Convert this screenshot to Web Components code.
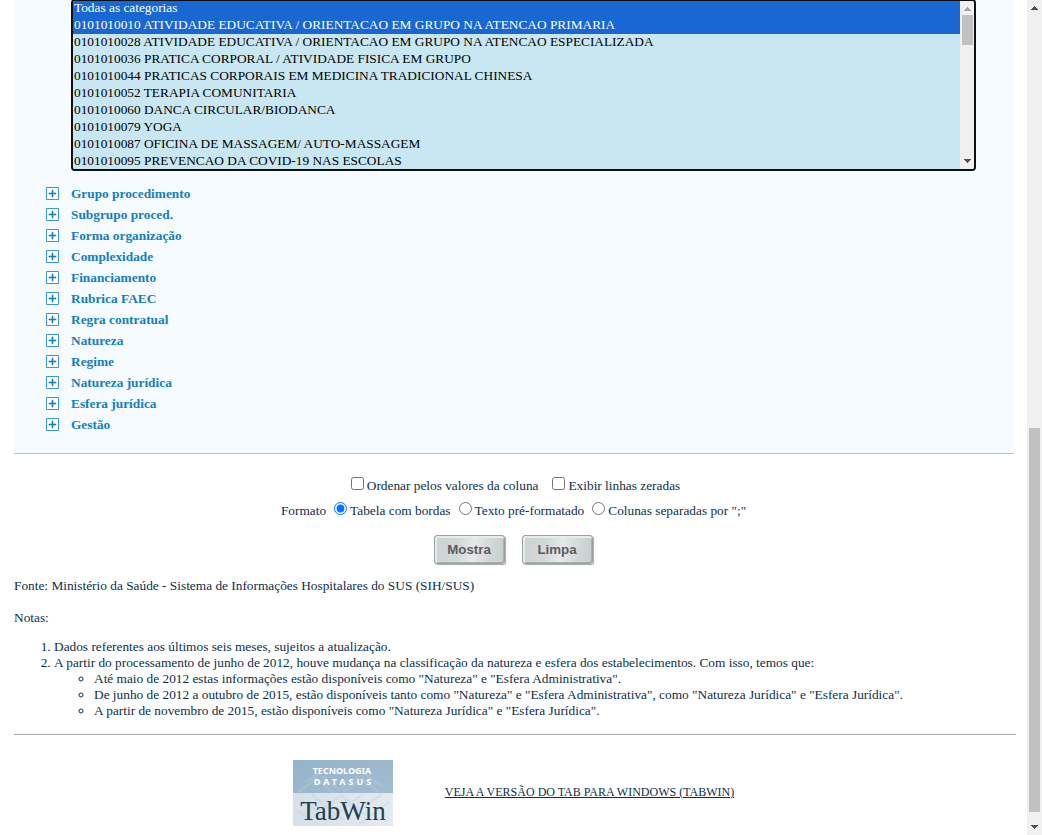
<!DOCTYPE html>
<html lang="pt-BR">
<head>
<meta charset="utf-8">
<title>TabNet - Procedimentos hospitalares do SUS</title>
<style>
html, body { margin: 0; height: 100%; }
body { background: #fff; color: #0c2f4c; font: 10pt/16px "Liberation Serif", "Times New Roman", serif; }
</style>
</head>
<body>
<tab-page>
  <selection-panel>
    <category-list></category-list>
    <fold-item>Grupo procedimento</fold-item>
    <fold-item>Subgrupo proced.</fold-item>
    <fold-item>Forma organização</fold-item>
    <fold-item>Complexidade</fold-item>
    <fold-item>Financiamento</fold-item>
    <fold-item>Rubrica FAEC</fold-item>
    <fold-item>Regra contratual</fold-item>
    <fold-item>Natureza</fold-item>
    <fold-item>Regime</fold-item>
    <fold-item>Natureza jurídica</fold-item>
    <fold-item>Esfera jurídica</fold-item>
    <fold-item>Gestão</fold-item>
  </selection-panel>
  <output-options></output-options>
  <source-notes></source-notes>
  <page-footer></page-footer>
</tab-page>

<script>
function define(name, html, ready) {
  const template = document.createElement('template');
  template.innerHTML = html;
  customElements.define(name, class extends HTMLElement {
    constructor() {
      super();
      this.attachShadow({ mode: 'open' }).append(template.content.cloneNode(true));
    }
    connectedCallback() { if (ready) ready(this.shadowRoot); }
  });
}

/* Scroll track; --before and --after share out the free track around the thumb */
define('scroll-track', `
<style>
  :host { display: flex; flex-direction: column; background: #f0f0f0; }
  svg { flex: none; display: block; width: 100%; height: 14px; }
  .track { flex: 1; display: flex; flex-direction: column; padding: 0 2px; }
  .before { flex: var(--before) 0 0px; }
  .thumb { flex: var(--thumb) 0 0px; background: #c1c1c1; }
  .after { flex: var(--after) 0 0px; }
  .up { fill: var(--up, #505050); }
  .down { fill: #505050; }
</style>
<svg viewBox="0 0 15 14" preserveAspectRatio="xMidYMid" aria-hidden="true"><path class="up" d="M4 10V9h1V8h1V7h1V6h1v1h1v1h1v1h1v1z"/></svg>
<div class="track"><div class="before"></div><div class="thumb"></div><div class="after"></div></div>
<svg viewBox="0 0 15 14" preserveAspectRatio="xMidYMid" aria-hidden="true"><path class="down" d="M4 4v1h1v1h1v1h1v1h1V7h1V6h1V5h1V4z"/></svg>`);

define('tab-page', `
<style>
  :host { display: grid; grid-template-columns: minmax(0, 1fr) 15px; height: 100vh; overflow: hidden; }
  main { min-height: 0; overflow: hidden; padding: 0 13px 0 14px; }
  scroll-track { --before: 414; --thumb: 384; --after: 9; }
</style>
<main><slot></slot></main>
<scroll-track></scroll-track>`);

define('selection-panel', `
<style>
  :host { display: flow-root; background: #f5fbff; border-bottom: 1px solid #b9c2c9; padding: 0 38px 18px 32px; }
</style>
<slot></slot>`);

define('category-list', `
<style>
  :host { display: flex; box-sizing: border-box; height: 172px; margin: -1px 0 12px 25px; border: 2px solid #101010; border-radius: 4px; overflow: hidden; background: #c9e7f2; }
  select { flex: 1; min-width: 0; height: 170px; margin: -1px 0; padding: 0; border: 0; outline: 0; border-radius: 0; background: #c9e7f2; color: #000; font: inherit; scrollbar-width: none; }
  option { box-sizing: border-box; height: 17px; min-height: 17px; line-height: 17px; padding: 0 1px; }
  option:checked { background: #1967d2 linear-gradient(#1967d2, #1967d2); -webkit-text-fill-color: #fff; }
  scroll-track { width: 15px; margin-right: -1px; --up: #a3a3a3; --before: 0; --thumb: 30; --after: 110; }
</style>
<select multiple size="10" aria-label="Procedimento">
  <option selected>Todas as categorias</option>
  <option selected>0101010010 ATIVIDADE EDUCATIVA / ORIENTACAO EM GRUPO NA ATENCAO PRIMARIA</option>
  <option>0101010028 ATIVIDADE EDUCATIVA / ORIENTACAO EM GRUPO NA ATENCAO ESPECIALIZADA</option>
  <option>0101010036 PRATICA CORPORAL / ATIVIDADE FISICA EM GRUPO</option>
  <option>0101010044 PRATICAS CORPORAIS EM MEDICINA TRADICIONAL CHINESA</option>
  <option>0101010052 TERAPIA COMUNITARIA</option>
  <option>0101010060 DANCA CIRCULAR/BIODANCA</option>
  <option>0101010079 YOGA</option>
  <option>0101010087 OFICINA DE MASSAGEM/ AUTO-MASSAGEM</option>
  <option>0101010095 PREVENCAO DA COVID-19 NAS ESCOLAS</option>
</select>
<scroll-track></scroll-track>`, root => root.querySelector('select').focus({ preventScroll: true }));

define('fold-item', `
<style>
  :host { display: block; height: 21px; line-height: 21px; }
  a { display: inline-flex; align-items: center; gap: 12px; color: #1480bd; font-weight: bold; text-decoration: none; }
  svg { width: 13px; height: 13px; }
</style>
<a href="#"><svg viewBox="0 0 13 13" aria-hidden="true"><path d="M.5.5h12v12H.5z" fill="#fff" stroke="#3b96c9"/><path d="M3 6h7v1H3zM6 3h1v7H6z" fill="#1480bd" stroke="#1480bd" stroke-width=".6"/></svg><slot></slot></a>`);

define('push-button', `
<style>
  :host { display: inline-block; }
  button { display: block; width: 71px; height: 29px; padding: 0; border: 1px solid #9ba1a1; border-radius: 3px; background: linear-gradient(100deg, #cdd2d3, #d4d8d9 35%, #e6e9e9 55%, #d2d6d7 80%, #c9cecf); box-shadow: inset 1px 1px 0 1px #e8ecec, inset -1px -1px 0 #a9afaf, 1px 1px 1px #a5a9a9; color: #5c5c5e; font: bold 10pt/27px "Liberation Sans", Arial, sans-serif; }
</style>
<button type="button"><slot></slot></button>`);

define('output-options', `
<style>
  :host { display: block; padding-top: 20px; }
  .line { display: flex; justify-content: center; height: 25px; line-height: 23px; }
  label { display: flex; }
  input { width: 13px; height: 13px; margin: 3px 3px 0; }
  .checks { gap: 11px; }
  .formats { gap: 5px; padding-right: 1px; }
  .buttons { display: flex; justify-content: center; gap: 17px; padding: 11px 2px 14px 0; }
</style>
<form>
  <div class="line checks">
    <label><input type="checkbox">Ordenar pelos valores da coluna</label>
    <label><input type="checkbox">Exibir linhas zeradas</label>
  </div>
  <div class="line formats">
    <span>Formato</span>
    <label><input type="radio" name="formato" checked>Tabela com bordas</label>
    <label><input type="radio" name="formato">Texto pré-formatado</label>
    <label><input type="radio" name="formato">Colunas separadas por ";"</label>
  </div>
  <div class="buttons"><push-button>Mostra</push-button><push-button>Limpa</push-button></div>
</form>`);

define('source-notes', `
<style>
  :host { display: block; }
  p { margin: 0 0 16px; }
  ol { margin: -3px 0 15px; padding-left: 40px; }
  ul { margin: 0; padding-left: 40px; }
</style>
<p>Fonte: Ministério da Saúde - Sistema de Informações Hospitalares do SUS (SIH/SUS)</p>
<p>Notas:</p>
<ol>
  <li>Dados referentes aos últimos seis meses, sujeitos a atualização.</li>
  <li>A partir do processamento de junho de 2012, houve mudança na classificação da natureza e esfera dos estabelecimentos. Com isso, temos que:
    <ul>
      <li>Até maio de 2012 estas informações estão disponíveis como "Natureza" e "Esfera Administrativa".</li>
      <li>De junho de 2012 a outubro de 2015, estão disponíveis tanto como "Natureza" e "Esfera Administrativa", como "Natureza Jurídica" e "Esfera Jurídica".</li>
      <li>A partir de novembro de 2015, estão disponíveis como "Natureza Jurídica" e "Esfera Jurídica".</li>
    </ul>
  </li>
</ol>`);

define('tabwin-logo', `
<style>
  :host { display: block; width: 100px; height: 66px; }
  svg { display: block; }
</style>
<svg width="100" height="66" viewBox="0 0 100 66" role="img" aria-label="Tecnologia DATASUS TabWin">
  <defs>
    <linearGradient id="sky" x2="1" y2="1"><stop stop-color="#94b3ca"/><stop offset="1" stop-color="#a2bccf"/></linearGradient>
    <linearGradient id="base" x2="1"><stop stop-color="#d5e0e8"/><stop offset="1" stop-color="#e3eaef"/></linearGradient>
  </defs>
  <path fill="url(#sky)" d="M0 0h100v33H0z"/>
  <path fill="url(#base)" d="M0 33h100v33H0z"/>
  <g fill="none" stroke="#fff" stroke-opacity=".09" stroke-width="3"><path d="M5 32l18-13 18 14M28 16l18 14 20-14M50 32l19-13 17 13M12 22l14-8M70 12l20 15"/></g>
  <g fill="none" stroke="#b9cad6" stroke-opacity=".3" stroke-width="2"><path d="M8 40l18 12 22-17 18 14 22-14M18 34l32 26M70 34L38 58M52 40l22 16M4 51l22 14M96 42L65 65"/></g>
  <g fill="#fff" font-family="Noto Sans, sans-serif" font-weight="bold" text-anchor="middle">
    <text x="49" y="14" font-size="9">TECNOLOGIA</text>
    <text x="51" y="25" font-size="9" letter-spacing="3">DATASUS</text>
  </g>
  <text x="50" y="60" font-family="Liberation Serif, serif" font-size="27" fill="#24404f" text-anchor="middle">TabWin</text>
</svg>`);

define('page-footer', `
<style>
  :host { display: block; margin-right: -2px; border-top: 1px solid #a8a8a8; }
  .row { display: flex; justify-content: center; align-items: center; gap: 52px; padding: 25px 3px 0 0; }
  a { color: #0c2f4c; font-size: 12px; padding-bottom: 2px; text-decoration: underline; }
</style>
<div class="row"><tabwin-logo></tabwin-logo><a href="#">VEJA A VERSÃO DO TAB PARA WINDOWS (TABWIN)</a></div>`);
</script>
</body>
</html>
